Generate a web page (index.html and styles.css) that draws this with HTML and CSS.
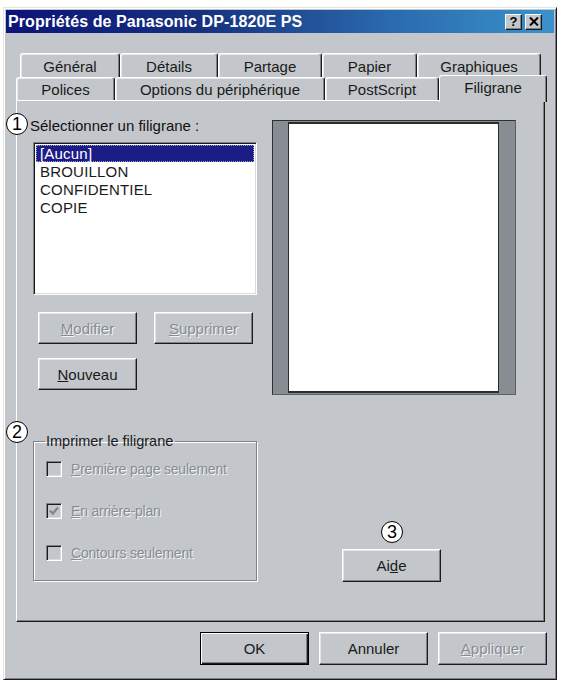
FILE: index.html
```html
<!DOCTYPE html>
<html lang="fr">
<head>
<meta charset="utf-8">
<title>Propriétés de Panasonic DP-1820E PS</title>
<link rel="stylesheet" href="styles.css">
</head>
<body>
<div class="window">
  <div class="titlebar">
    <span class="title">Propriétés de Panasonic DP-1820E PS</span>
    <div class="tbtns">
      <span class="tbtn help">?</span>
      <span class="tbtn close"><svg width="10" height="9" viewBox="0 0 10 9"><path d="M1 0.5 L9 8.5 M9 0.5 L1 8.5" stroke="#000" stroke-width="2"/></svg></span>
    </div>
  </div>
  <div class="tabs">
    <div class="row back">
      <div class="tab w-gen">Général</div>
      <div class="tab w-det">Détails</div>
      <div class="tab w-par">Partage</div>
      <div class="tab w-pap">Papier</div>
      <div class="tab w-gra">Graphiques</div>
    </div>
    <div class="row front">
      <div class="tab w-pol">Polices</div>
      <div class="tab w-opt">Options du périphérique</div>
      <div class="tab w-ps">PostScript</div>
      <div class="tab active w-fil">Filigrane</div>
    </div>
  </div>
  <div class="panel">
    <div class="left">
      <div class="label">Sélectionner un filigrane :</div>
      <div class="listbox">
        <div class="item sel">[Aucun]</div>
        <div class="item">BROUILLON</div>
        <div class="item">CONFIDENTIEL</div>
        <div class="item">COPIE</div>
      </div>
      <div class="btnrow">
        <div class="btn disabled"><span class="u">M</span>odifier</div>
        <div class="btn disabled"><span class="u">S</span>upprimer</div>
      </div>
      <div class="btnrow second">
        <div class="btn"><span class="u">N</span>ouveau</div>
      </div>
      <fieldset class="group">
        <legend>Imprimer le filigrane</legend>
        <div class="check"><span class="box"></span><span class="dis"><span class="u">P</span>remière page seulement</span></div>
        <div class="check"><span class="box"><svg width="12" height="12" viewBox="0 0 12 12"><path d="M2 5.5 L4.8 8.5 L10 2.5" fill="none" stroke="#80868c" stroke-width="2.2"/></svg></span><span class="dis"><span class="u">E</span>n arrière-plan</span></div>
        <div class="check"><span class="box"></span><span class="dis"><span class="u">C</span>ontours seulement</span></div>
      </fieldset>
    </div>
    <div class="right">
      <div class="preview"><div class="page"></div></div>
      <div class="btn aide">Ai<span class="u">d</span>e</div>
    </div>
  </div>
  <div class="footer">
    <div class="btn default">OK</div>
    <div class="btn">Annuler</div>
    <div class="btn disabled"><span class="u">A</span>ppliquer</div>
  </div>
</div>
<span class="mark m1">1</span>
<span class="mark m2">2</span>
<span class="mark m3">3</span>
</body>
</html>
```
FILE: styles.css
```css
html, body {
  margin: 0;
  padding: 0;
  background: #ffffff;
}
body {
  position: relative;
  width: 562px;
  height: 684px;
  overflow: hidden;
  font-family: "Liberation Sans", Arial, sans-serif;
  font-size: 15px;
  color: #111;
}
.window {
  margin: 7px 0 0 3px;
  width: 554px;
  height: 673px;
  box-sizing: border-box;
  border: 1px solid;
  border-color: #e2e4e6 #1a1a1a #1a1a1a #e2e4e6;
  box-shadow: inset 1px 1px #ffffff, inset -1px -1px #7c8288;
  padding: 2px;
  background: #c3c7cb;
  display: flex;
  flex-direction: column;
}
.titlebar {
  height: 23px;
  flex: none;
  background: linear-gradient(to right, #0c1478 0%, #16307e 35%, #2a6aae 70%, #3a92cc 100%);
  display: flex;
  align-items: center;
  justify-content: space-between;
  padding: 0 12px 0 2px;
}
.title {
  color: #fff;
  font-weight: bold;
  font-size: 16px;
  letter-spacing: 0.1px;
}
.tbtns {
  display: flex;
  gap: 3px;
}
.tbtn {
  width: 17px;
  height: 16px;
  box-sizing: border-box;
  background: #c3c7cb;
  border: 1px solid;
  border-color: #fff #1a1a1a #1a1a1a #fff;
  box-shadow: inset -1px -1px #7c8288;
  display: flex;
  align-items: center;
  justify-content: center;
  font-weight: bold;
  font-size: 13px;
  line-height: 13px;
  color: #000;
}
.tabs {
  margin-top: 20px;
  flex: none;
  display: flex;
  flex-direction: column;
}
.row {
  display: flex;
  align-items: flex-end;
}
.row.back {
  margin-left: 14px;
  height: 24px;
}
.row.front {
  margin-left: 10px;
  height: 23px;
}
.tab {
  box-sizing: border-box;
  height: 100%;
  border-top: 1px solid #fff;
  border-left: 1px solid #fff;
  border-right: 1px solid #1a1a1a;
  border-radius: 3px 3px 0 0;
  box-shadow: inset -1px 0 #7c8288, inset 1px 1px #e6e8ea;
  display: flex;
  align-items: center;
  justify-content: center;
  padding-top: 1px;
  color: #1a1a1a;
  white-space: nowrap;
}
.w-gen { width: 100px; }
.w-det { width: 98px; }
.w-par { width: 104px; }
.w-pap { width: 95px; }
.w-gra { width: 124px; }
.w-pol { width: 99px; }
.w-opt { width: 210px; }
.w-ps { width: 114px; }
.w-fil { width: 108px; }
.tab.active {
  position: relative;
  z-index: 2;
  height: 27px;
  margin-bottom: -2px;
  background: #c3c7cb;
  align-items: flex-start;
  padding-top: 3px;
  box-shadow: inset -1px 0 #7c8288;
}
.panel {
  margin-left: 10px;
  width: 529px;
  height: 522px;
  box-sizing: border-box;
  border: 1px solid;
  border-color: #fff #1a1a1a #1a1a1a #fff;
  box-shadow: inset -1px -1px #7c8288;
  display: grid;
  grid-template-columns: 224px 244px;
  column-gap: 15px;
  padding-left: 16px;
  align-items: start;
}
.left, .right {
  display: flex;
  flex-direction: column;
}
.label {
  margin-top: 16px;
  margin-left: -3px;
  line-height: 17px;
  white-space: nowrap;
}
.listbox {
  margin-top: 8px;
  width: 224px;
  height: 153px;
  box-sizing: border-box;
  background: #fff;
  border: 1px solid;
  border-color: #7c8288 #fff #fff #7c8288;
  box-shadow: inset 1px 1px #1a1a1a, inset -1px -1px #d8dadc;
  padding: 2px 2px 0 2px;
}
.item {
  height: 18px;
  line-height: 18px;
  padding-left: 4px;
  font-size: 15px;
  letter-spacing: 0.2px;
  color: #1a1a1a;
}
.item.sel {
  background: #1c1c86;
  color: #fff;
  outline: 1px dotted #9aa0c8;
  outline-offset: -1px;
  height: 17px;
  line-height: 17px;
  margin-bottom: 1px;
}
.btnrow {
  display: flex;
  gap: 17px;
  margin-top: 17px;
  margin-left: 5px;
}
.btnrow.second {
  margin-top: 14px;
}
.btn {
  width: 99px;
  height: 32px;
  box-sizing: border-box;
  background: #c3c7cb;
  border: 1px solid;
  border-color: #fff #1a1a1a #1a1a1a #fff;
  box-shadow: inset -1px -1px #7c8288, inset 1px 1px #e2e4e6;
  display: flex;
  align-items: center;
  justify-content: center;
  color: #1a1a1a;
  font-size: 15px;
}
.btn.disabled, .dis {
  color: #868c92;
  text-shadow: 1px 1px #f4f5f6;
}
.u {
  text-decoration: underline;
}
.group {
  margin: 43px 0 0 0;
  width: 224px;
  height: 148px;
  box-sizing: border-box;
  border: 1px solid #7c8288;
  box-shadow: inset 1px 1px #fff, 1px 1px #fff;
  padding: 12px 0 0 12px;
  min-width: 0;
}
.group legend {
  padding: 0 2px 0 1px;
  margin-left: -1px;
  color: #1a1a1a;
  line-height: 16px;
  font-size: 14.5px;
}
.check {
  display: flex;
  align-items: center;
  gap: 9px;
  height: 16px;
  margin-bottom: 26px;
  white-space: nowrap;
  font-size: 14px;
  letter-spacing: -0.2px;
}
.box {
  width: 16px;
  height: 16px;
  box-sizing: border-box;
  border: 1px solid;
  border-color: #7c8288 #fff #fff #7c8288;
  box-shadow: inset 1px 1px #1a1a1a, inset -1px -1px #d8dadc;
  background: #c3c7cb;
  display: flex;
  align-items: center;
  justify-content: center;
  flex: none;
}
.preview {
  margin-top: 19px;
  width: 244px;
  height: 275px;
  box-sizing: border-box;
  background: #878d93;
  border: 1px solid #2e3134;
  border-right-color: #5a5f64;
  border-bottom-color: #5a5f64;
  padding: 1px 16px 1px 15px;
}
.page {
  height: 100%;
  box-sizing: border-box;
  background: #fff;
  border: 1px solid #2a2d30;
  border-top-width: 2px;
  border-bottom-width: 2px;
}
.btn.aide {
  margin-top: 154px;
  margin-left: 70px;
  height: 33px;
}
.footer {
  margin-top: 10px;
  display: flex;
  justify-content: flex-end;
  gap: 10px;
  padding-right: 7px;
}
.footer .btn {
  width: 109px;
  height: 33px;
}
.btn.default {
  border: 1px solid #000;
  box-shadow: inset 1px 1px #fff, inset -1px -1px #1a1a1a, inset -2px -2px #7c8288;
}
.mark {
  position: absolute;
  width: 22px;
  height: 22px;
  box-sizing: border-box;
  border: 1.5px solid #000;
  border-radius: 50%;
  background: #fff;
  display: flex;
  align-items: center;
  justify-content: center;
  font-size: 18px;
  line-height: 1;
  color: #000;
}
.m1 { left: 6px; top: 113px; }
.m2 { left: 6px; top: 421px; }
.m3 { left: 381px; top: 521px; }
```
